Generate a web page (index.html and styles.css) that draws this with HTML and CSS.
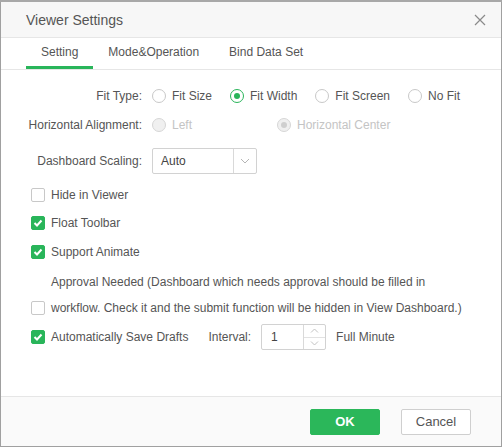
FILE: index.html
```html
<!DOCTYPE html>
<html>
<head>
<meta charset="utf-8">
<link rel="stylesheet" href="styles.css">
</head>
<body>
<div class="dialog">
  <div class="header">
    <span class="title">Viewer Settings</span>
    <svg class="close" width="12" height="12" viewBox="0 0 12 12"><path d="M1 1L11 11M11 1L1 11" stroke="#8a8a8a" stroke-width="1.2" fill="none"/></svg>
  </div>
  <div class="tabs">
    <div class="tab active">Setting</div>
    <div class="tab">Mode&amp;Operation</div>
    <div class="tab">Bind Data Set</div>
  </div>
  <div class="content">
    <div class="frow r-fit">
      <div class="label">Fit Type:</div>
      <div class="radios">
        <label class="radio"><span class="circle"></span>Fit Size</label>
        <label class="radio"><span class="circle on"></span>Fit Width</label>
        <label class="radio"><span class="circle"></span>Fit Screen</label>
        <label class="radio"><span class="circle"></span>No Fit</label>
      </div>
    </div>
    <div class="frow r-align">
      <div class="label">Horizontal Alignment:</div>
      <div class="radios dis">
        <label class="radio w-left"><span class="circle"></span>Left</label>
        <label class="radio"><span class="circle on"></span>Horizontal Center</label>
      </div>
    </div>
    <div class="frow r-scale">
      <div class="label">Dashboard Scaling:</div>
      <div class="select">
        <span class="sel-val">Auto</span>
        <span class="sel-arrow"><svg width="10" height="6" viewBox="0 0 10 6"><path d="M1 1L5 5L9 1" stroke="#b5b5b5" fill="none"/></svg></span>
      </div>
    </div>
    <div class="checks">
      <div class="crow"><span class="box"></span>Hide in Viewer</div>
      <div class="crow"><span class="box on"><svg width="10" height="8" viewBox="0 0 10 8"><path d="M1.5 4L4 6.5L8.5 1.5" stroke="#fff" stroke-width="2" fill="none"/></svg></span>Float Toolbar</div>
      <div class="crow anim"><span class="box on"><svg width="10" height="8" viewBox="0 0 10 8"><path d="M1.5 4L4 6.5L8.5 1.5" stroke="#fff" stroke-width="2" fill="none"/></svg></span>Support Animate</div>
      <div class="approval">
        <div class="aline">Approval Needed (Dashboard which needs approval should be filled in</div>
        <div class="crow"><span class="box"></span>workflow. Check it and the submit function will be hidden in View Dashboard.)</div>
      </div>
      <div class="crow save"><span class="box on"><svg width="10" height="8" viewBox="0 0 10 8"><path d="M1.5 4L4 6.5L8.5 1.5" stroke="#fff" stroke-width="2" fill="none"/></svg></span>Automatically Save Drafts
        <span class="interval">Interval:</span>
        <span class="spinner">
          <span class="spin-val">1</span>
          <span class="spin-btns">
            <span class="sb"><svg width="9" height="5" viewBox="0 0 9 5"><path d="M1 4.5L4.5 1L8 4.5" stroke="#c2c2c2" fill="none"/></svg></span>
            <span class="sb sb2"><svg width="9" height="5" viewBox="0 0 9 5"><path d="M1 0.5L4.5 4L8 0.5" stroke="#c2c2c2" fill="none"/></svg></span>
          </span>
        </span>
        <span class="unit">Full Minute</span>
      </div>
    </div>
  </div>
  <div class="footer">
    <button class="btn ok">OK</button>
    <button class="btn cancel">Cancel</button>
  </div>
</div>
</body>
</html>
```
FILE: styles.css
```css
html, body { margin: 0; padding: 0; }
body {
  width: 502px; height: 447px; overflow: hidden;
  background: #a8a8a8;
  font-family: "Liberation Sans", Arial, sans-serif;
  font-size: 12px; color: #4a4a4a;
}
.dialog {
  box-sizing: border-box;
  margin-top: 2px;
  width: 502px; height: 445px;
  border: 1px solid #a0a0a0; border-top: none;
  background: #fff;
  display: flex; flex-direction: column;
}
.header {
  height: 35px; background: #f7f7f7;
  border-bottom: 1px solid #e6e6e6;
  display: flex; align-items: center; justify-content: space-between;
  padding: 0 15px 0 25px;
}
.title { font-size: 14px; color: #555; }
.close { display: block; }
.tabs {
  height: 31px; border-bottom: 1px solid #e6e6e6;
  display: flex; padding-left: 25px;
}
.tab {
  padding: 0 15px; line-height: 28px; color: #555;
  border-bottom: 3px solid transparent;
}
.tab.active { border-bottom-color: #29b55a; }
.content { flex: 1; padding-top: 11px; }
.frow { display: flex; align-items: center; }
.label { width: 151px; text-align: right; padding-right: 10px; box-sizing: border-box; color: #555; }
.r-fit { height: 30px; }
.r-align { height: 30px; margin-top: -1px; }
.r-scale { height: 30px; margin-top: 6px; }
.radios { display: flex; align-items: center; }
.radio { display: flex; align-items: center; margin-right: 18px; color: #555; }
.circle {
  width: 14px; height: 14px; box-sizing: border-box;
  border: 1px solid #c8c8c8; border-radius: 50%; margin-right: 6px;
  background: #fff; position: relative;
}
.circle.on { border-color: #29b55a; }
.circle.on::after {
  content: ""; position: absolute; left: 3px; top: 3px;
  width: 6px; height: 6px; border-radius: 50%; background: #29b55a;
}
.dis .radio { color: #c4c4c4; }
.dis .circle { background: #f0f0f0; border-color: #d6d6d6; }
.dis .circle.on::after { background: #cfcfcf; }
.w-left { width: 107px; margin-right: 18px; }
.select {
  width: 105px; height: 26px; box-sizing: border-box;
  border: 1px solid #d2d2d2; border-radius: 2px;
  display: flex; align-items: center;
}
.sel-val { flex: 1; padding-left: 8px; color: #444; }
.sel-arrow {
  width: 22px; height: 24px; border-left: 1px solid #d9d9d9;
  display: flex; align-items: center; justify-content: center;
}
.checks { padding-left: 30px; margin-top: 5px; }
.crow { display: flex; align-items: center; height: 28px; color: #555; }
.anim { margin-top: 1px; }
.box {
  width: 14px; height: 14px; box-sizing: border-box;
  border: 1px solid #c8c8c8; border-radius: 2px; margin-right: 6px;
  background: #fff; display: flex; align-items: center; justify-content: center;
  flex: none;
}
.box.on { background: #29b55a; border-color: #29b55a; }
.box svg { display: block; }
.approval { margin-top: 2px; }
.aline { padding-left: 20px; height: 29px; line-height: 29px; color: #555; }
.approval .crow { margin-top: -3px; }
.save { margin-top: 1px; }
.interval { margin-left: 20px; margin-right: 10px; }
.spinner {
  width: 65px; height: 26px; box-sizing: border-box;
  border: 1px solid #d2d2d2; border-radius: 2px;
  display: flex;
}
.spin-val { flex: 1; padding-left: 9px; line-height: 24px; color: #444; }
.spin-btns { width: 21px; border-left: 1px solid #d9d9d9; display: flex; flex-direction: column; }
.sb { flex: 1; display: flex; align-items: center; justify-content: center; }
.sb2 { border-top: 1px solid #e2e2e2; }
.unit { margin-left: 10px; }
.footer {
  height: 49px; background: #fafafa; border-top: 1px solid #e6e6e6;
  display: flex; align-items: center; justify-content: flex-end;
  padding-right: 30px; gap: 21px;
}
.btn {
  width: 70px; height: 26px; border-radius: 2px;
  font-family: "Liberation Sans", Arial, sans-serif; font-size: 13px;
  margin: 0; padding: 0;
}
.ok { background: #2bb75a; border: 1px solid #2bb75a; color: #fff; font-weight: bold; }
.cancel { background: #fff; border: 1px solid #cfcfcf; color: #555; }
```
